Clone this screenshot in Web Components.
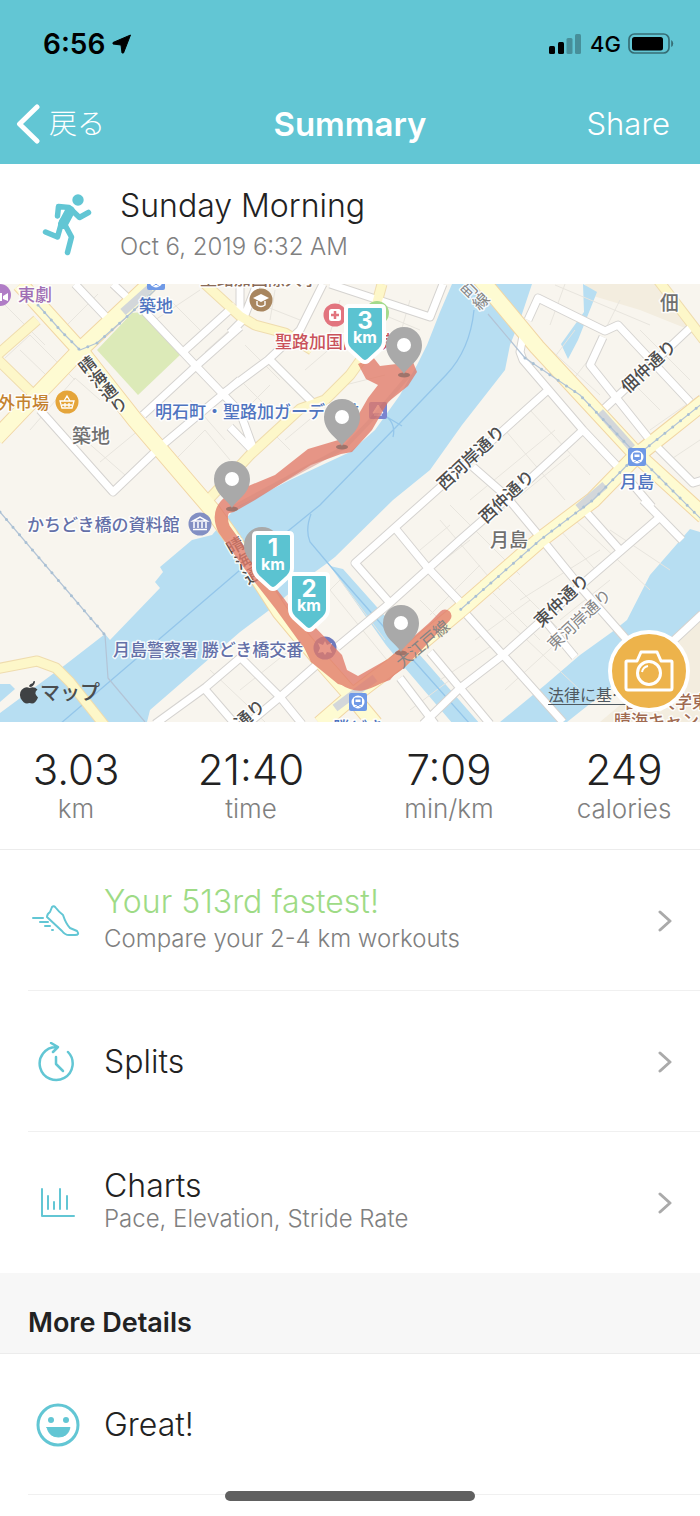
<!DOCTYPE html>
<html lang="en">
<head>
<meta charset="utf-8">
<meta name="viewport" content="width=device-width, initial-scale=1">
<title>Workout Summary</title>
<style>
html, body { margin: 0; background: #fff; }
body { font-family: Inter, "Noto Sans CJK JP", sans-serif; font-weight: 300; color: #222; --teal: #62c6d4; --muted: #808080; --line: #f0f0f0; }
</style>
</head>
<body>
<workout-app>
  <phone-status slot="top" time="6:56" network="4G"></phone-status>
  <nav-bar slot="top" heading="Summary"><span slot="back">戻る</span><span slot="action">Share</span></nav-bar>
  <workout-title><span slot="name">Sunday Morning</span><span slot="date">Oct 6, 2019 6:32 AM</span></workout-title>
  <route-map></route-map>
  <stat-strip>
    <stat-item label="km">3.03</stat-item>
    <stat-item label="time">21:40</stat-item>
    <stat-item label="min/km">7:09</stat-item>
    <stat-item label="calories">249</stat-item>
  </stat-strip>
  <detail-row icon="shoe" link highlight>Your 513rd fastest!<span slot="sub">Compare your 2-4 km workouts</span></detail-row>
  <detail-row icon="clock" link>Splits</detail-row>
  <detail-row icon="chart" link last>Charts<span slot="sub">Pace, Elevation, Stride Rate</span></detail-row>
  <section-title>More Details</section-title>
  <detail-row icon="smile">Great!</detail-row>
  <home-indicator slot="bottom"></home-indicator>
</workout-app>

<script>
const define = (name, render, setup) => customElements.define(name, class extends HTMLElement {
  connectedCallback() {
    if (this.shadowRoot) return;
    this.attachShadow({ mode: 'open' }).innerHTML = render(this);
    if (setup) setup(this);
  }
});

define('workout-app', () => `
<style>
:host { display: block; position: relative; padding-bottom: 21px; background: #fff; }
header { background: var(--teal); }
</style>
<header><slot name="top"></slot></header>
<main><slot></slot></main>
<slot name="bottom"></slot>`);

define('phone-status', el => `
<style>
:host { display: flex; align-items: center; justify-content: space-between; height: 84px; padding: 4px 26px 0 43px; box-sizing: border-box; color: #000; }
div { display: flex; align-items: center; gap: 7px; }
.time { font-size: 28px; font-weight: 600; }
.net { font-size: 22px; font-weight: 500; margin-left: 2px; }
svg { display: block; }
</style>
<div><span class="time">${el.getAttribute('time')}</span>
<svg width="20" height="20" viewBox="0 0 20 20"><path d="M18.500 1 1 8.500V10L9 11 10 19H11.500Z" stroke="#000" stroke-linejoin="round"/></svg></div>
<div><svg width="32" height="20" viewBox="0 0 32 20"><rect y="12" width="6" height="8" rx="1.500"/><rect x="9" y="8" width="6" height="12" rx="1.500"/><g opacity=".27"><rect x="17.500" y="4" width="6" height="16" rx="1.500"/><rect x="26" width="6" height="20" rx="1.500"/></g></svg>
<span class="net">${el.getAttribute('network')}</span>
<svg width="46" height="22" viewBox="0 0 46 22"><rect x="1" y="1" width="40" height="19" rx="5.500" fill="none" stroke="#000" stroke-opacity=".45" stroke-width="1.700"/><rect x="4" y="4" width="31" height="13.500" rx="2.500"/><path d="M43.200 7v7q2-1 2-3.500t-2-3.500z" opacity=".45"/></svg></div>`);

define('nav-bar', el => `
<style>
:host { display: grid; grid-template-columns: 1fr auto 1fr; align-items: center; height: 80px; padding: 0 30px 0 16px; color: #fff; }
h1 { margin: 0; font-size: 33px; line-height: 40px; font-weight: 600; margin-left: 14px; }
button { all: unset; cursor: pointer; display: flex; align-items: center; font-size: 31px; line-height: 40px; }
.back { font-size: 28px; gap: 9px; justify-self: start; }
.action { justify-self: end; }
</style>
<button class="back" type="button"><svg width="24" height="40" viewBox="0 0 24 40"><path d="M21 3 3.500 20 21 37" fill="none" stroke="#fff" stroke-width="5" stroke-linecap="round" stroke-linejoin="round"/></svg><slot name="back"></slot></button>
<h1>${el.getAttribute('heading')}</h1>
<button class="action" type="button"><slot name="action"></slot></button>`);

define('workout-title', () => `
<style>
:host { display: flex; align-items: center; gap: 28px; height: 118px; padding: 2px 28px 0 42px; }
svg { display: block; flex: none; }
.name { font-size: 32px; line-height: 44px; font-weight: 300; margin: 0; }
.date { font-size: 24px; line-height: 38px; color: var(--muted); margin: 0; }
</style>
<svg width="50" height="62" viewBox="0 0 50 62" fill="none" stroke="#62c6d4" stroke-linecap="round" stroke-linejoin="round"><circle cx="36" cy="6" r="5.700" fill="#62c6d4" stroke="none"/><path d="M15.500 22 16.500 12.500 27 13.500 37.500 23.500 46.500 18.500" stroke-width="5.500"/><path d="M28 17 21 30" stroke-width="10"/><path d="M20 27 15.500 43 3.500 38M23 31 29.500 43 25.500 58.500" stroke-width="5.500"/></svg>
<div><h2 class="name"><slot name="name"></slot></h2><p class="date"><slot name="date"></slot></p></div>`);

const street = ['M145 312 195 365 240 412 255 453M235 305 183 352M240 327 195 367 143 415M240 380 160 447 113 492 40 410',
 'M323 284 300 330 268 360 225 392M268 358 313 403M330 284 430 317 443 284M257 284 243 320 230 333M230 427 256 454',
 'M240 317V284M75 284 108 319M113 284 133 303',
 'M525 325 520 352 523 360 583 430 618 467 652 507M548 390 437 490 355 563 390 603M583 430 532 477 460 540 390 603 337 647M395 528 427 567 463 605',
 'M473 467 505 495 540 537 583 590 627 640M528 320 538 298 605 331 618 325 690 402M603 337 590 365 650 440 693 483 703 480M605 408 690 328',
 'M587 513 620 550M660 517 587 580 503 655 460 688 423 724M643 500 682 540M467 615 503 655 563 722M547 623 575 657',
 'M240 657 280 697 302 724M330 653 280 697 250 722M400 678 435 724M430 652 490 724M155 724 206 687 240 658M203 687 235 724M672 642 702 614'].join('');
const avenue = 'M20 284 80 350 135 420 212 510 230 535 280 612 320 660 350 694 375 724M150 284 80 350-4 438M478 276 537 347 637 455 704 516M704 402 635 457 593 500 540 540 460 610 400 660 350 698 320 724';
const lane = 'M37 320-4 356M-4 358 35 396M205 284 240 316 255 325 285 333 312 350M382 284 375 310 368 350 350 375 325 400 300 409 250 455 210 498M658 280 704 340M-4 669 37 661 56 668 70 682 105 726';
const parcels = 'M0 300 45 345M5 358 30 335 75 380M45 374 20 350M62 330 98 294M30 430 75 378 100 400M100 462 145 425M85 440 125 475M118 410 155 450M155 320 200 290M170 300 200 330M205 352 235 325M190 400 225 440M175 460 205 430 230 460M200 370 222 392M240 380 270 410M235 420 270 385M245 345 280 380M262 305 300 320M275 290 270 320M340 300 325 350M360 305 420 330M410 300 400 335M305 370 340 340M285 440 315 415M345 385 385 375M270 430 290 450M565 284 550 325M575 330 545 370M600 345 565 390M620 300 605 330M540 340 600 395M555 285 650 325M625 375 660 410M640 330 690 380M650 430 700 395M670 460 700 440M530 410 590 475M505 430 565 500M470 500 555 430M490 520 570 455M450 505 520 575M440 520 500 590M420 550 450 525M405 590 470 540M430 615 480 565M480 580 540 640M500 570 560 630M490 605 580 690M520 600 600 550M475 640 530 600M505 690 560 640M560 530 600 575M575 520 650 590M610 530 670 570M560 620 610 580M310 610 340 580 385 640M330 590 395 670M320 720 340 700M240 690 290 650M210 670 265 722M420 600 450 630M440 680 500 640M410 710 450 680';

define('route-map', () => `
<style>
:host { display: block; position: relative; overflow: hidden; }
.map { display: block; width: 100%; height: auto; }
.b { paint-order: stroke; stroke: #fff; stroke-width: 3px; stroke-linejoin: round; stroke-opacity: .85; }
text { font-family: "Noto Sans CJK JP", sans-serif; font-weight: 500; font-size: 17px; }
.area { font-size: 19px; fill: #707070; }
.road { fill: #4d4d4d; }
.thin { fill: #858585; font-weight: 400; font-size: 16px; }
.rail { fill: #4f74c0; }
.civic { fill: #6470a8; }
.v { writing-mode: vertical-rl; }
.km text { font-family: Inter, sans-serif; fill: #fff; font-weight: 700; text-anchor: middle; font-size: 24px; }
.km text + text { font-size: 16px; }
.legal { position: absolute; left: 78.300%; bottom: 16px; color: #4f5960; font: 400 16px/24px "Noto Sans CJK JP", sans-serif; text-underline-offset: 3px; }
.camera { position: absolute; right: 10px; bottom: 10px; width: 82px; height: 82px; padding: 0; border: 4px solid #fff; border-radius: 50%; background: #edb34b; display: grid; place-items: center; cursor: pointer; }
</style>
<svg class="map" viewBox="0 284 700 438" role="img" aria-label="Route map">
<defs>
<g id="pin"><ellipse cy="30" rx="6" ry="2.500" fill="#8f6b64" opacity=".8"/><path d="M0 29C-4 21-18 15-18 0A18 18 0 0 1 18 0C18 15 4 21 0 29Z" fill="#a9a9a9"/><circle r="7" fill="#fff"/></g>
<path id="shield" d="M-16-28H16Q19-28 19-25V7Q19 12 15 16L3 27Q0 29-3 27L-15 16Q-19 12-19 7V-25Q-19-28-16-28Z" fill="#5bc3d1" stroke="#fff" stroke-width="4"/>
<g id="station"><rect x="-9" y="-9" width="18" height="18" rx="2" fill="#6f99e6"/><circle r="6.500" fill="#fff"/><rect x="-4" y="-4.500" width="8" height="7.500" rx="1.500" fill="#6f99e6"/><path d="M-2.500-2.500h5v2.500h-5z" fill="#fff"/><path d="m-3 5.500 2-2h2l2 2" stroke="#6f99e6" fill="none"/></g>
</defs>
<rect y="284" width="700" height="438" fill="#f8f5ee"/>
<path d="M585 284H660L690 330 640 310 590 295Z M672 640 700 618V722H600L650 680Z" fill="#f3eddf"/>
<g fill="#b7def2">
<path d="M452 284 440 312 427 345 417 365 400 395 375 430 350 452 290 480 235 508 225 520 212 535 192 540 160 567 163 572 155 582 160 588 110 640 105 634 65 665 0 713V722H147L150 710 240 632 272 608 312 574 326 564 335 557 393 500 430 470 462 425 505 370 510 345 520 320 532 284Z"/>
<path d="M0 684H10L15 689 0 702Z"/>
<path d="M330 566 343 569 400 633 427 663 480 724H453L405 668 386 645Z"/>
<path d="M690 529 700 532V614L660 650 615 684 567 722H500L545 685 580 655 612 632 627 620 650 575Z"/>
<path d="M583 284 597 292 578 340 568 359 561 344 584 312Z"/>
</g>
<path d="M97 350 132 313 142 312 180 355 138 395Z" fill="#dceab8"/>
<path d="${parcels}" fill="none" stroke="#e8e5de"/>
<path d="M474 310Q470 350 446 375L398 425 320 505 240 570 60 724M311 514Q305 530 310 542L332 568 390 634 470 724M387 417Q396 425 393 437M387 417 402 426" fill="none" stroke="#94c6ea" stroke-width="1.300"/>
<g fill="none" stroke-linejoin="round">
<path d="${street}" stroke="#d5d3d0" stroke-width="9"/>
<path d="${lane}" stroke="#efdcae" stroke-width="11"/>
<path d="${avenue}" stroke="#f1d6a5" stroke-width="17"/>
<path d="${street}" stroke="#fff" stroke-width="7"/>
<path d="${lane}" stroke="#fdf7c9" stroke-width="9"/>
<path d="${avenue}" stroke="#fefbd2" stroke-width="15"/>
<path d="M600 412 632 448M335 708 375 678M123 312 150 288M578 508 605 485" stroke="#b5bfe0" stroke-opacity=".6" stroke-width="8"/>
<path d="M38 305 62 332 80 350 97 343 130 314 155 290M0 512 105 635 108 678 145 722M488 314 525 358 580 395 637 455 704 522M704 402 635 457 593 500 540 540 460 610" stroke="#b3c4d6" stroke-width="1.200"/>
<path d="M38 305 62 332 80 350 97 343 130 314 155 290M0 512 105 635M525 358 580 395 637 455 704 522M704 402 635 457 593 500 540 540 460 610" stroke="#a9c0d4" stroke-width="3" stroke-linecap="round" stroke-dasharray="0 10"/>
</g>

<g class="b">
<text x="18" y="301" fill="#a06fb5">東劇</text>
<text x="139" y="312" class="rail">築地</text>
<text x="-2" y="409" fill="#c4822f">外市場</text>
<text x="72" y="443" class="area">築地</text>
<text x="200" y="285" fill="#8a6b58">聖路加国際大学</text>
<text x="275" y="348" fill="#c9525b">聖路加国際病院</text>
<text x="155" y="418" class="rail">明石町・聖路加ガーデン前</text>
<text x="27" y="531" class="civic">かちどき橋の資料館</text>
<text x="113" y="656" class="civic">月島警察署 勝どき橋交番</text>
<text x="490" y="547" class="area">月島</text>
<text x="620" y="488" class="rail">月島</text>
<text x="660" y="310" class="area">佃</text>
<text x="333" y="734" class="rail">勝どき</text>
<text x="624" y="708" fill="#a06a50">首都大学東京</text>
<text x="614" y="727" fill="#a06a50">晴海キャンパス</text>
<text class="road v" transform="translate(82 358) rotate(-38)">晴海通り</text>
<text class="road v" transform="translate(231 538) rotate(-30)">晴海通</text>
<text class="thin v" transform="translate(464 284) rotate(-45)">町線</text>
<text class="road" transform="translate(444 491) rotate(-43)">西河岸通り</text>
<text class="road" transform="translate(486 524) rotate(-43)">西仲通り</text>
<text class="road" transform="translate(628 394) rotate(-43)">佃仲通り</text>
<text class="road" transform="translate(541 628) rotate(-43)">東仲通り</text>
<text class="thin" transform="translate(554 651) rotate(-43)">東河岸通り</text>
<text class="road" transform="translate(241 730) rotate(-41)">通り</text>
</g>

<g transform="translate(0 295)"><circle r="11" fill="#b07cc6"/><path d="M-8-2H2V6H-8ZM3 1 8-2V6L3 4ZM-3-6a3 3 0 1 0 .1 0" fill="#fff"/></g>
<g transform="translate(67 402)"><circle r="11.500" fill="#e5a53a"/><path d="M-7-1H7L5 6H-5ZM-3-1 0-6 3-1M-2 1V5M2 1V5M-5 3H5" fill="none" stroke="#fff" stroke-width="1.300"/></g>
<g transform="translate(261 300)"><circle r="11.500" fill="#a8865f"/><path d="m-8-2 8-4 8 4-8 4Z" fill="#fff"/><path d="M-4 1V5Q0 8 4 5V1" fill="none" stroke="#fff" stroke-width="1.400"/></g>
<g transform="translate(335 315)"><circle r="11.500" fill="#e2747e"/><rect x="-6" y="-6" width="12" height="12" rx="2.500" fill="#fff"/><path d="M0-4V4M-4 0H4" stroke="#e2747e" stroke-width="2.500"/></g>
<circle cx="377" cy="313" r="12" fill="#a5da8c"/>
<g transform="translate(200 524)"><circle r="11.500" fill="#828fc3"/><path d="M-7-3 0-7 7-3ZM-6-2V4M-2-2V4M2-2V4M6-2V4M-7 5.500H7" fill="none" stroke="#fff" stroke-width="1.500"/></g>
<g transform="translate(325 648)"><circle r="11.500" fill="#6e7abd"/><path d="m0-7 2 4 5-2-2 5 2 5-5-1-2 3-2-3-5 1 2-5-2-5 5 2Z" fill="#fff"/></g>
<rect x="369" y="402" width="18" height="17" rx="2" fill="#7a83cf"/><path d="m378 405 5 8h-10ZM374 415h8" fill="#fff" stroke="#fff"/>
<use href="#station" x="637" y="457"/><use href="#station" x="358" y="702"/><use href="#station" x="156" y="281"/>

<g opacity=".78">
<path d="M358 364 373 357 380 366 413 362 417 372 408 386 388 402 372 430 352 452 341 454 311 465 255 500 234 512 225 514 218 506 246 487 275 475 308 449 345 438 368 398 378 385 366 379Z" fill="#e27b69"/>
<path d="M228 503Q217 513 224 529L252 568 280 604 306 640 328 662Q345 686 362 684 377 681 400 663L445 616" fill="none" stroke="#e27b69" stroke-width="13" stroke-linecap="round" stroke-linejoin="round"/>
<path d="M310 622 342 655 347 670 358 676 388 659 444 610 450 618 402 666 390 680 362 690 338 684 311 662 298 635Z" fill="#e27b69"/>
<path d="M410 374 371 420 345 447 232 508" stroke="#cf6d62" stroke-width="4" fill="none" opacity=".5"/>
</g>
<text class="thin" transform="translate(402 669) rotate(-40)">大江戸線</text>

<use href="#pin" x="404" y="345"/><use href="#pin" x="342" y="417"/><use href="#pin" x="232" y="479"/><use href="#pin" x="262" y="545"/><use href="#pin" x="401" y="623"/>
<g class="km">
<g transform="translate(365 334)"><use href="#shield"/><text y="-5">3</text><text y="9">km</text></g>
<g transform="translate(273 561)"><use href="#shield"/><text y="-5">1</text><text y="9">km</text></g>
<g transform="translate(309 602)"><use href="#shield"/><text y="-5">2</text><text y="9">km</text></g>
</g>
<path d="M33 683Q32.500 681 35 681 35 685 31 687 29 687 29 686 29.500 684 33 683ZM24 688Q27 686.500 29.500 688 34 686 37.500 689.500 33 693 38 697.500 35.500 703.500 32 703.500 29.500 702.500 27 703.500 23.500 703.500 20.500 698 18.500 691 24 688Z" fill="#3f4244"/>
<text x="40" y="700" fill="#4a4d4f" style="font-size:20px">マップ</text>
</svg>
<a class="legal" href="#legal">法律に基…</a>
<button class="camera" type="button" aria-label="Add photo"><svg width="50" height="42" viewBox="0 0 50 42" fill="none" stroke="#fff" stroke-width="3" stroke-linejoin="round"><path d="M3 11H13L17 2H33L37 11H47Q48 11 48 12V38Q48 40 46 40H4Q2 40 2 38V12Q2 11 3 11Z"/><circle cx="25" cy="23" r="11.500"/><path d="M18 22Q19 17 24 16" stroke-width="2"/></svg></button>`);

define('stat-strip', () => `
<style>:host { display: grid; grid-template-columns: 152fr 198fr 198fr 152fr; height: 127px; align-items: center; border-bottom: 1px solid #ececec; }</style><slot></slot>`);

define('stat-item', el => `
<style>
:host { display: block; text-align: center; padding-bottom: 2px; }
.v { font-size: 42px; line-height: 48px; }
.l { font-size: 26px; line-height: 30px; color: var(--muted); }
</style><div class="v"><slot></slot></div><div class="l">${el.getAttribute('label')}</div>`);

const icons = {
  shoe: '<svg width="48" height="32" viewBox="0 0 48 32"><path d="M20 2Q22 0 24 3 27 7 31 10 34 19 38 23L45 26Q48 30 43 30H37Q33 30 30 26L15 12Q15 9 18 7Z"/><path d="M1 13H11M8 17H16M13 21H18M20 25H21"/></svg>',
  clock: '<svg width="48" height="40" viewBox="0 0 48 40"><path d="M36 10A16.500 16.500 0 1 1 24 5M19 1 26 5 21 10" stroke-width="2.500"/><path d="M24 15V22L31 29" stroke-width="2.500"/></svg>',
  chart: '<svg width="48" height="32" viewBox="0 0 48 32"><path d="M10 2V29H42M16 9V22M22 15V22M28 2V22M35 9V22"/></svg>',
  smile: '<svg width="48" height="44" viewBox="0 0 48 44"><circle cx="26" cy="22" r="20" stroke-width="3"/><path d="M15 24.500H38Q36 34 26.500 34T15 24.500Z" fill="#62c6d4" stroke-width="1"/><g fill="#62c6d4" stroke="none"><circle cx="19" cy="17" r="3"/><circle cx="34" cy="17" r="3"/></g></svg>'
};

define('detail-row', el => {
  const link = el.hasAttribute('link'), tag = link ? 'a' : 'div';
  return `
<style>
:host { display: block; padding-left: 28px; }
.row { display: flex; align-items: center; gap: 24px; min-height: 141px; box-sizing: border-box; padding: 2px 28px 0 4px; border-bottom: 1px solid var(--line); color: inherit; text-decoration: none; }
:host([last]) .row { border-color: transparent; }
.row > svg { flex: none; display: block; fill: none; stroke: var(--teal); stroke-width: 2; stroke-linecap: round; stroke-linejoin: round; }
.text { flex: 1; display: flex; flex-direction: column; }
.text:has(.s) { padding-bottom: 6px; }
.t { font-size: 32px; line-height: 38px; }
:host([highlight]) .t { color: #9edb86; }
:host([highlight]) .text { gap: 4px; }
.s { font-size: 24px; line-height: 28px; color: var(--muted); }
.row > .go { stroke: #aaa; stroke-width: 3; }
</style>
<${tag} class="row"${link ? ` href="#${el.getAttribute('icon')}"` : ''}>${icons[el.getAttribute('icon')]}
<div class="text"><span class="t"><slot></slot></span><span class="s"><slot name="sub"></slot></span></div>
${link ? '<svg class="go" width="14" height="22" viewBox="0 0 14 22"><path d="M2 2 12 11 2 20"/></svg>' : ''}</${tag}>`;
}, el => {
  if (!el.querySelector('[slot=sub]')) el.shadowRoot.querySelector('.s').remove();
});

define('section-title', () => `
<style>:host { display: block; background: #f7f7f7; border-bottom: 1px solid #ececec; padding: 34px 28px 14px; }
h2 { margin: 0; font-size: 27px; line-height: 32px; font-weight: 600; }</style><h2><slot></slot></h2>`);

define('home-indicator', () => `
<style>:host { position: absolute; left: 0; right: 0; bottom: 15px; display: flex; justify-content: center; pointer-events: none; }
i { width: 250px; height: 10px; border-radius: 5px; background: #606060; }</style><i></i>`);
</script>
</body>
</html>
